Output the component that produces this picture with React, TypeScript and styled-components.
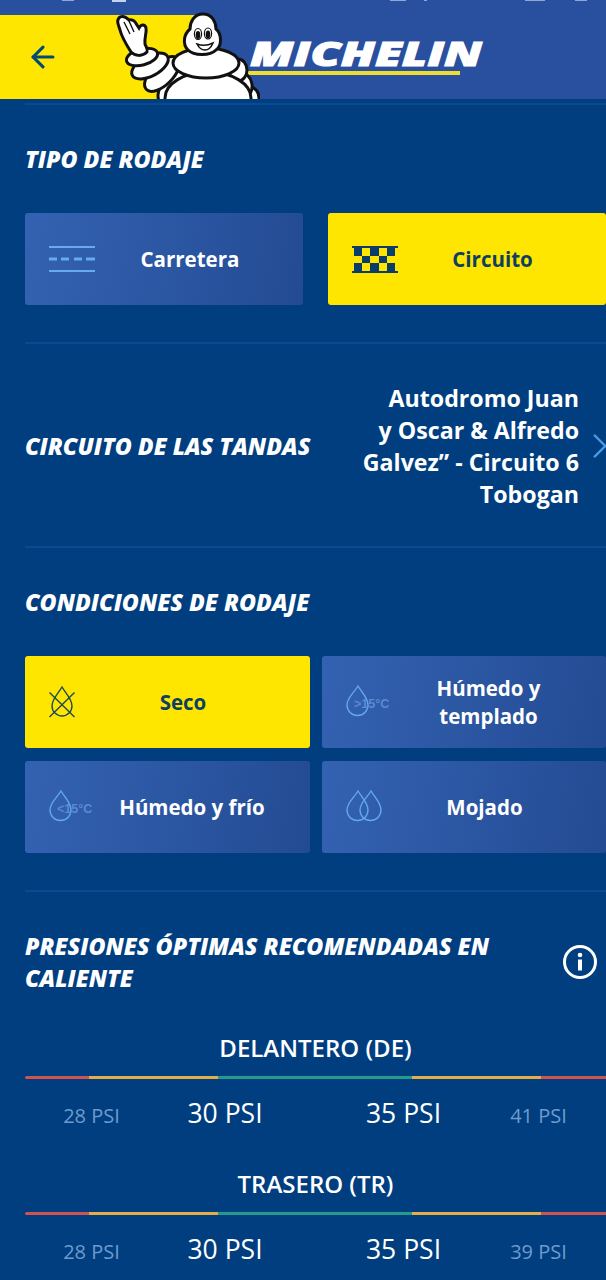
import React from "react";
import styled, { createGlobalStyle } from "styled-components";
import { ArrowLeft, ChevronRight } from "lucide-react";

const Global = createGlobalStyle`
  html, body { margin: 0; padding: 0; background: #003e80; overflow: hidden; height: 1280px; }
  * { box-sizing: border-box; }
`;
const Page = styled.div`
  width: 606px; height: 1280px; overflow: hidden; background: #003e80; color: #fff;
  font-family: "Open Sans", "Noto Sans", sans-serif;
`;
const StatusBar = styled.svg`display: block; background: #29509f;`;
const Header = styled.header`
  position: relative; height: 84px; background: #29509f; display: flex; margin-bottom: 4px;
`;
const YellowPanel = styled.div`
  width: 200px; background: #ffe600; display: flex; align-items: center; padding-left: 26px; color: #004a75;
`;
const Wordmark = styled.div`
  margin: 26px 0 0 50px; height: 34px; width: 234px; position: relative;
`;
const WordmarkText = styled.div`
  font-family: "Open Sans", sans-serif; font-style: italic; font-weight: 800; font-size: 34px; line-height: 25px;
  color: #fff; -webkit-text-stroke: 1px #fff; white-space: nowrap; transform: scaleX(1.41); transform-origin: left center;
`;
const WordmarkLine = styled.div`
  position: absolute; left: -3px; top: 30px; width: 213px; height: 4px; background: #eedd33;
`;
const Man = styled.svg`position: absolute; left: 110px; top: -5px;`;

const Section = styled.section<{ $pt: number; $pb: number }>`
  margin-left: 25px; border-top: 2px solid #0a4a90; padding: ${p => p.$pt}px 0 ${p => p.$pb}px;
`;
const Title = styled.h2`
  margin: 0; font-size: 23.2px; line-height: 32px; font-weight: 800; font-style: italic; color: #fff;
`;
const Row = styled.div`margin-top: 38px; display: grid; grid-template-columns: 278px 278px; gap: 25px;`;
const CondGrid = styled.div`margin-top: 38px; display: grid; grid-template-columns: 285px 284px; column-gap: 12px; row-gap: 13px;`;
const OptionButton = styled.div<{ $active?: boolean; $pr: number }>`
  height: 92px; border-radius: 3px; display: flex; align-items: center; padding: 0 ${p => p.$pr}px 0 24px;
  font-size: 20.5px; font-weight: 700; line-height: 28px; text-align: center;
  background: ${p => (p.$active ? "#ffe600" : "linear-gradient(100deg, #3462b2, #234b93)")};
  color: ${p => (p.$active ? "#0d4060" : "#fff")};
`;
const IconSlot = styled.div`width: 46px; flex: none; display: flex; align-items: center;`;
const OptionLabel = styled.div`flex: 1;`;
const CircuitRow = styled.div`display: flex; align-items: center; position: relative; padding-right: 27px;`;
const CircuitTitle = styled(Title)`flex: 1; white-space: nowrap;`;
const CircuitName = styled.div`
  width: 230px; text-align: right; font-size: 23.2px; line-height: 32px; font-weight: 700; flex: none;
`;
const Chevron = styled.div`position: absolute; right: -15px; top: 43px; color: #4a9ae8; display: flex;`;
const PressureHead = styled.div`display: flex; align-items: center; justify-content: space-between; padding-right: 9px;`;
const InfoSlot = styled.div`display: flex;`;
const AxleName = styled.div<{ $mt: number }>`
  margin-top: ${p => p.$mt}px; text-align: center;
  font-size: 24px; line-height: 32px; font-weight: 600;
`;
const Bar = styled.div`
  margin-top: 12px; height: 3px; display: grid; grid-template-columns: 64px 129px 194px 129px 65px; border-radius: 2px 0 0 2px; overflow: hidden;
`;
const BarPart = styled.div<{ $c: string }>`background: ${p => p.$c};`;
const Scale = styled.div`
  margin: 15px 0 0 10px; height: 37px; display: grid; grid-template-columns: 113px 154px 203px 67px; align-items: start; justify-items: center;
`;
const Limit = styled.div`font-size: 20px; line-height: 36px; padding-top: 4px; color: #6d9bcd; white-space: nowrap;`;
const Optimal = styled.div`font-size: 26.5px; line-height: 36px; padding-top: 1px; color: #fff; white-space: nowrap;`;

const Ic = { stroke: "#62a8f0", fill: "none" };
const drop = "M12,1 C17,9 22,13 22,20 A10.5,10.5 0 0 1 1,20 C1,13 7,9 12,1Z";

const RoadIcon = () => (
  <svg width="46" height="26" viewBox="0 0 46 26" fill="none" stroke="#66aaf0" strokeWidth="2">
    <path d="M0,1H46M0,25H46" />
    <path d="M0,13H8M12,13H20M25,13H33M37,13H46" strokeWidth="3" />
  </svg>
);
const CheckIcon = () => (
  <svg width="46" height="27" viewBox="0 0 46 27" fill="#0a3d6a">
    <rect x="0" y="0" width="46" height="2" />
    <rect x="0" y="25" width="46" height="2" />
    <rect x="2" y="2" width="8" height="8" />
    <rect x="18" y="2" width="9" height="8" />
    <rect x="35" y="2" width="8" height="8" />
    <rect x="10" y="10" width="8" height="7" />
    <rect x="27" y="10" width="8" height="7" />
    <rect x="2" y="17" width="8" height="8" />
    <rect x="18" y="17" width="9" height="8" />
    <rect x="35" y="17" width="8" height="8" />
  </svg>
);
const DryIcon = () => (
  <svg width="26" height="32" viewBox="0 0 26 32" fill="none" stroke="#1e4a50" strokeWidth="1.4">
    <path d="M13,1 C17,8 23,13 23,20 A10,10 0 0 1 3,20 C3,13 9,8 13,1Z" />
    <path d="M0.5,6.5 L25.5,31 M25.5,6.5 L0.5,31" />
  </svg>
);
const TempDrop = ({ t }: { t: string }) => (
  <svg width="46" height="34" viewBox="0 0 46 34">
    <path d={drop} {...Ic} strokeWidth="1.4" />
    <text x="8" y="23" fontFamily="Liberation Sans, sans-serif" fontSize="12.5" fill="#5a8ad2">{t}</text>
  </svg>
);
const DoubleDrop = () => (
  <svg width="46" height="34" viewBox="0 0 46 34">
    <path d={drop} {...Ic} strokeWidth="1.4" />
    <path d={drop} transform="translate(13,0)" {...Ic} strokeWidth="1.4" />
  </svg>
);
const InfoIcon = () => (
  <svg width="34" height="34" viewBox="0 0 34 34">
    <circle cx="17" cy="17" r="15.5" fill="none" stroke="#fff" strokeWidth="3" />
    <circle cx="17" cy="10" r="2.3" fill="#fff" />
    <rect x="15" y="14.5" width="4" height="11" fill="#fff" />
  </svg>
);
const Bibendum = () => (
  <Man width="150" height="89" viewBox="110 10 150 89" stroke="#111" strokeWidth="3" fill="#fff">
    <ellipse cx="250" cy="98" rx="9" ry="11" />
    <ellipse cx="243" cy="85" rx="9" ry="12" transform="rotate(-10 243 85)" />
    <ellipse cx="238" cy="70" rx="9" ry="11" />
    <ellipse cx="176" cy="84" rx="24" ry="12" transform="rotate(-50 176 84)" />
    <ellipse cx="162" cy="74" rx="22" ry="11" transform="rotate(-45 162 74)" />
    <ellipse cx="150" cy="66" rx="20" ry="10" transform="rotate(-28 150 66)" />
    <ellipse cx="142" cy="57" rx="16" ry="8" transform="rotate(-15 142 57)" />
    <path d="M131,52 C126,44 122,38 120,30 C118,24 116,20 120,17 C124,15 127,18 129,20 C132,19 135,21 137,25 L139,28 C141,24 145,24 146,28 C147,33 144,38 145,44 C146,47 148,49 147,52 C142,57 135,56 131,52Z" />
    <path d="M124,22 L130,34 M129,21 L134,32" fill="none" strokeWidth="1.4" />
    <ellipse cx="208" cy="98" rx="43" ry="26" />
    <ellipse cx="206" cy="63" rx="33" ry="15" />
    <path d="M203,14 C212,14 216,22 216,29 C222,34 222,46 216,50 C210,56 194,56 188,50 C182,44 184,34 190,29 C190,22 194,14 203,14Z" />
    <ellipse cx="198" cy="34" rx="3.6" ry="5.5" strokeWidth="1.2" />
    <ellipse cx="208" cy="33.5" rx="3.6" ry="5.5" strokeWidth="1.2" />
    <ellipse cx="198" cy="35" rx="2.3" ry="4" fill="#111" stroke="none" />
    <ellipse cx="208" cy="34.5" rx="2.3" ry="4" fill="#111" stroke="none" />
    <path d="M197,44 Q205,47 213,43 Q210,50 205,50 Q200,50 197,44Z" fill="#fff" strokeWidth="1.5" />
  </Man>
);

const Pressure = ({ name, mt, hi }: { name: string; mt: number; hi: string }) => (
  <>
    <AxleName $mt={mt}>{name}</AxleName>
    <Bar>
      <BarPart $c="#cf5350" />
      <BarPart $c="#e6ac45" />
      <BarPart $c="#269b8c" />
      <BarPart $c="#e6ac45" />
      <BarPart $c="#cf5350" />
    </Bar>
    <Scale>
      <Limit>28 PSI</Limit>
      <Optimal>30 PSI</Optimal>
      <Optimal>35 PSI</Optimal>
      <Limit>{hi}</Limit>
    </Scale>
  </>
);

export default function App() {
  return (
    <Page>
      <Global />
      <StatusBar width="606" height="15" viewBox="0 0 606 15" fill="#8fa8d8">
        <rect x="62" y="0" width="12" height="1" />
        <rect x="112" y="0" width="14" height="2" fill="#c4d2ec" />
        <rect x="390" y="0" width="16" height="1" />
        <rect x="424" y="0" width="3" height="1" />
        <rect x="525" y="0" width="20" height="1" />
        <rect x="575" y="0" width="12" height="1" />
      </StatusBar>
      <Header>
        <YellowPanel><ArrowLeft size={34} strokeWidth={2.2} /></YellowPanel>
        <Wordmark>
          <WordmarkText>MICHELIN</WordmarkText>
          <WordmarkLine />
        </Wordmark>
        <Bibendum />
      </Header>
      <Section $pt={38} $pb={37}>
        <Title>TIPO DE RODAJE</Title>
        <Row>
          <OptionButton $pr={18}><IconSlot><RoadIcon /></IconSlot><OptionLabel>Carretera</OptionLabel></OptionButton>
          <OptionButton $active $pr={19}><IconSlot><CheckIcon /></IconSlot><OptionLabel>Circuito</OptionLabel></OptionButton>
        </Row>
      </Section>
      <Section $pt={38} $pb={36}>
        <CircuitRow>
          <CircuitTitle>CIRCUITO DE LAS TANDAS</CircuitTitle>
          <CircuitName>Autodromo Juan<br />y Oscar &amp; Alfredo<br />Galvez” - Circuito 6<br />Tobogan</CircuitName>
          <Chevron><ChevronRight size={42} strokeWidth={1.4} /></Chevron>
        </CircuitRow>
      </Section>
      <Section $pt={38} $pb={37}>
        <Title>CONDICIONES DE RODAJE</Title>
        <CondGrid>
          <OptionButton $active $pr={39}><IconSlot><DryIcon /></IconSlot><OptionLabel>Seco</OptionLabel></OptionButton>
          <OptionButton $pr={21}><IconSlot><TempDrop t=">15°C" /></IconSlot><OptionLabel>Húmedo y templado</OptionLabel></OptionButton>
          <OptionButton $pr={21}><IconSlot><TempDrop t="<15°C" /></IconSlot><OptionLabel>Húmedo y frío</OptionLabel></OptionButton>
          <OptionButton $pr={29}><IconSlot><DoubleDrop /></IconSlot><OptionLabel>Mojado</OptionLabel></OptionButton>
        </CondGrid>
      </Section>
      <Section $pt={38} $pb={0}>
        <PressureHead>
          <Title>PRESIONES ÓPTIMAS RECOMENDADAS EN<br />CALIENTE</Title>
          <InfoSlot><InfoIcon /></InfoSlot>
        </PressureHead>
        <Pressure name="DELANTERO (DE)" mt={38} hi="41 PSI" />
        <Pressure name="TRASERO (TR)" mt={37} hi="39 PSI" />
      </Section>
    </Page>
  );
}
